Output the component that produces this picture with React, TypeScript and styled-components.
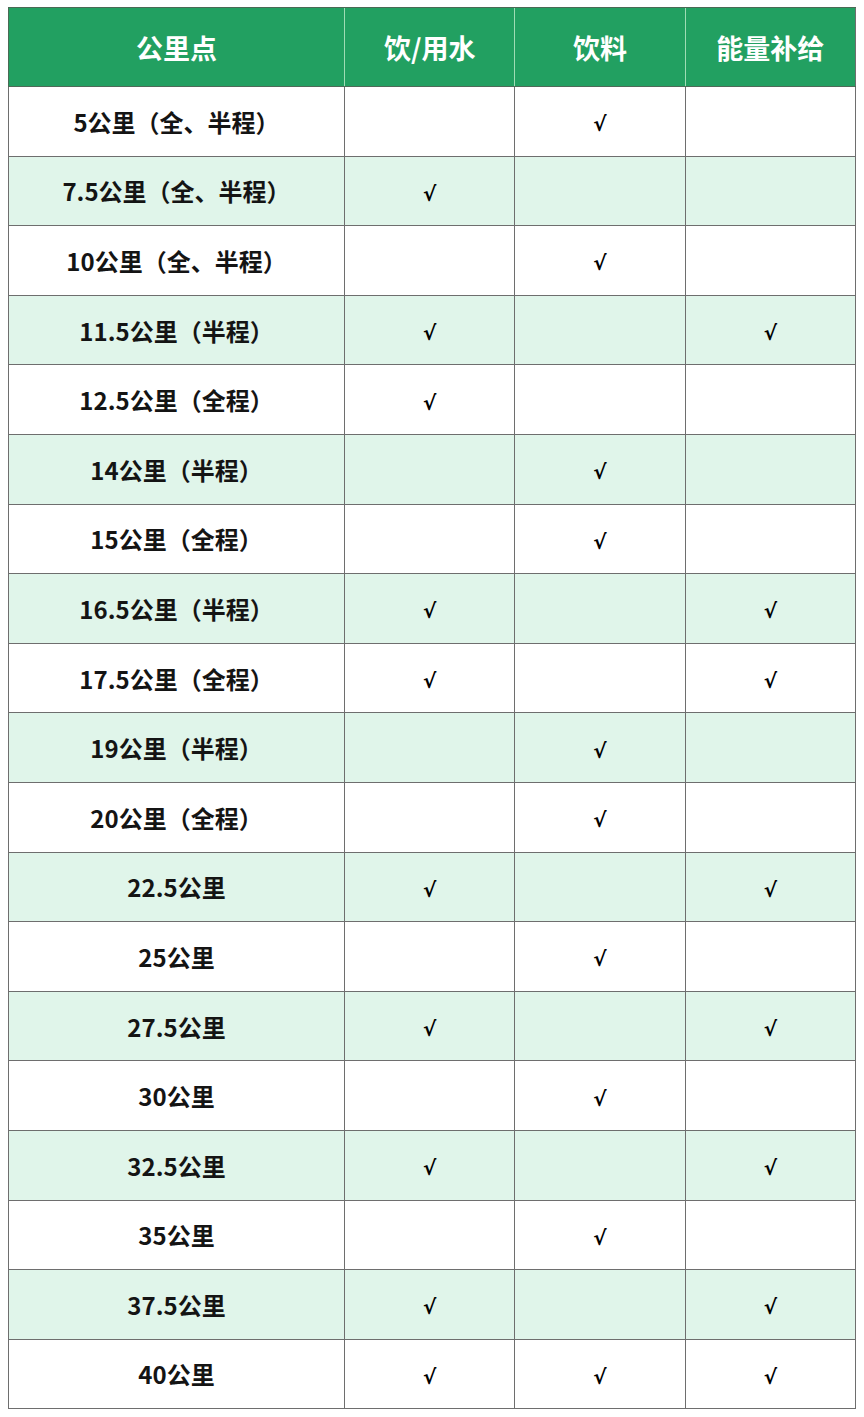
import styled, { createGlobalStyle } from "styled-components";

const GlobalStyle = createGlobalStyle`
  html, body {
    margin: 0;
    padding: 0;
    background: #ffffff;
  }
  body {
    font-family: "Noto Sans CJK SC", "Noto Sans", sans-serif;
  }
`;

const Page = styled.div`
  padding: 7px 8px 8px 8px;
`;

const Table = styled.table`
  width: 848px;
  border-collapse: collapse;
  table-layout: fixed;
  border: 1.5px solid #6e6e6e;
`;

const HeadCell = styled.th<{ $wide?: boolean }>`
  ${(p) => (p.$wide ? "width: 335px;" : "")}
  height: 78px;
  padding: 0;
  background: #22a061;
  color: #ffffff;
  font-size: 27px;
  font-weight: 700;
  text-align: center;
  vertical-align: middle;
  border-left: 1.5px solid #9fdcb4;
  border-top: 1.5px solid #4a6a55;
  border-bottom: 1.5px solid #4f6a58;
  &:first-child {
    border-left: 1.5px solid #4a6a55;
  }
`;

const Row = styled.tr<{ $alt: boolean }>`
  background: ${(p) => (p.$alt ? "#e0f5ea" : "#ffffff")};
`;

const Cell = styled.td`
  height: 68.6px;
  padding: 0;
  border: 1.5px solid #6e6e6e;
  text-align: center;
  vertical-align: middle;
  color: #111111;
`;

const PointCell = styled(Cell)`
  font-size: 24px;
  font-weight: 700;
  color: #141414;
`;

const Check = styled.span`
  display: inline-block;
  font-family: "DejaVu Sans", sans-serif;
  font-size: 20px;
  font-weight: 700;
  color: #000000;
  transform: translateY(3px);
`;

type Stop = { point: string; water: boolean; drink: boolean; energy: boolean };

const stops: Stop[] = [
  { point: "5公里（全、半程）", water: false, drink: true, energy: false },
  { point: "7.5公里（全、半程）", water: true, drink: false, energy: false },
  { point: "10公里（全、半程）", water: false, drink: true, energy: false },
  { point: "11.5公里（半程）", water: true, drink: false, energy: true },
  { point: "12.5公里（全程）", water: true, drink: false, energy: false },
  { point: "14公里（半程）", water: false, drink: true, energy: false },
  { point: "15公里（全程）", water: false, drink: true, energy: false },
  { point: "16.5公里（半程）", water: true, drink: false, energy: true },
  { point: "17.5公里（全程）", water: true, drink: false, energy: true },
  { point: "19公里（半程）", water: false, drink: true, energy: false },
  { point: "20公里（全程）", water: false, drink: true, energy: false },
  { point: "22.5公里", water: true, drink: false, energy: true },
  { point: "25公里", water: false, drink: true, energy: false },
  { point: "27.5公里", water: true, drink: false, energy: true },
  { point: "30公里", water: false, drink: true, energy: false },
  { point: "32.5公里", water: true, drink: false, energy: true },
  { point: "35公里", water: false, drink: true, energy: false },
  { point: "37.5公里", water: true, drink: false, energy: true },
  { point: "40公里", water: true, drink: true, energy: true },
];

function Mark({ on }: { on: boolean }) {
  return <Cell>{on ? <Check>√</Check> : null}</Cell>;
}

export default function App() {
  return (
    <>
      <GlobalStyle />
      <Page>
        <Table>
          <thead>
            <tr>
              <HeadCell $wide>公里点</HeadCell>
              <HeadCell>饮/用水</HeadCell>
              <HeadCell>饮料</HeadCell>
              <HeadCell>能量补给</HeadCell>
            </tr>
          </thead>
          <tbody>
            {stops.map((s, i) => (
              <Row key={s.point} $alt={i % 2 === 1}>
                <PointCell>{s.point}</PointCell>
                <Mark on={s.water} />
                <Mark on={s.drink} />
                <Mark on={s.energy} />
              </Row>
            ))}
          </tbody>
        </Table>
      </Page>
    </>
  );
}
